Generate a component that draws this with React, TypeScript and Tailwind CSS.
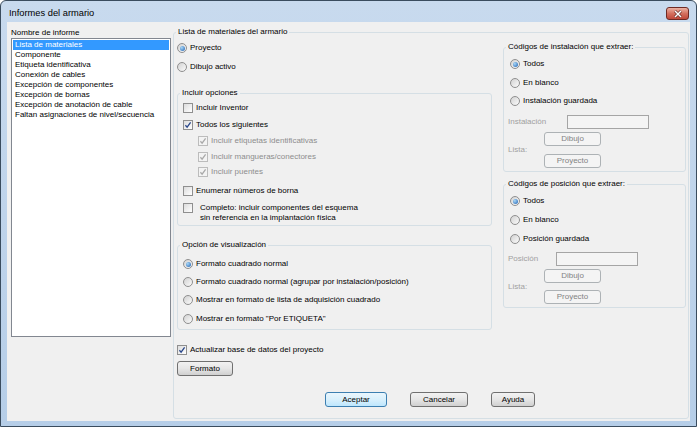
import type { ReactNode } from 'react';

function Radio({ checked, label, className = '' }: { checked?: boolean; label: string; className?: string }) {
  return (
    <div className={`flex h-[10px] items-center ${className}`}>
      <span className="flex h-[10px] w-[10px] shrink-0 items-center justify-center rounded-full border border-[#8f8f8f] bg-gradient-to-br from-[#d2d2d2] to-[#fbfbfb]">
        {checked && (
          <span className="h-[5px] w-[5px] rounded-full bg-[radial-gradient(circle_at_35%_35%,#a9d8f8,#1d5fb0)]" />
        )}
      </span>
      <span className="ml-[3px] whitespace-nowrap">{label}</span>
    </div>
  );
}

function Check({
  checked,
  disabled,
  children,
  className = '',
  textClass = 'ml-[3px]',
}: {
  checked?: boolean;
  disabled?: boolean;
  children: ReactNode;
  className?: string;
  textClass?: string;
}) {
  return (
    <div className={`flex items-start ${className}`}>
      <span
        className={`flex h-[10px] w-[10px] shrink-0 items-center justify-center border ${
          disabled ? 'border-[#bcbcbc] bg-[#f3f3f3]' : 'border-[#8f8f8f] bg-gradient-to-br from-[#dcdcdc] to-white'
        }`}
      >
        {checked && (
          <svg viewBox="0 0 8 8" className="h-[8px] w-[8px]">
            <path
              d="M1.4 4.3 L3.1 6.2 L6.6 1.4"
              fill="none"
              stroke={disabled ? '#a9a9a9' : '#28468a'}
              strokeWidth="1.3"
            />
          </svg>
        )}
      </span>
      <span className={`whitespace-nowrap leading-[10px] ${textClass} ${disabled ? 'text-[#8d8d8d]' : ''}`}>
        {children}
      </span>
    </div>
  );
}

function Group({ title, className = '', children }: { title: string; className?: string; children?: ReactNode }) {
  return (
    <fieldset className={`rounded-[3px] border border-[#d5dfe5] ${className}`}>
      <legend className="ml-[2px] px-[2px] leading-[10px]">{title}</legend>
      {children}
    </fieldset>
  );
}

function Btn({
  children,
  className = '',
  disabled,
  primary,
}: {
  children: ReactNode;
  className?: string;
  disabled?: boolean;
  primary?: boolean;
}) {
  const look = disabled
    ? 'border-[#adb2b5] bg-[#f4f4f4] text-[#838383]'
    : primary
      ? 'border-[#3c7fb1] bg-gradient-to-b from-[#eaf6fd] via-[#d9f0fc] to-[#bee6fd]'
      : 'border-[#707070] bg-gradient-to-b from-[#f2f2f2] via-[#e6e6e6] to-[#d0d0d0]';
  return (
    <div className={`flex items-center justify-center rounded-[3px] border leading-[10px] ${look} ${className}`}>
      {children}
    </div>
  );
}

const reports = [
  'Lista de materiales',
  'Componente',
  'Etiqueta identificativa',
  'Conexión de cables',
  'Excepción de componentes',
  'Excepción de bornas',
  'Excepción de anotación de cable',
  'Faltan asignaciones de nivel/secuencia',
];

function CodeGroup({
  title,
  saved,
  field,
  labelW,
  className,
  gaps,
}: {
  title: string;
  saved: string;
  field: string;
  labelW: string;
  className: string;
  gaps: string[];
}) {
  return (
    <Group title={title} className={className}>
      <div className="ml-[6px] flex flex-col">
        <Radio checked label="Todos" className="mt-[7px]" />
        <Radio label="En blanco" className={gaps[0]} />
        <Radio label={saved} className={gaps[1]} />
      </div>
      <div className={`ml-[4px] flex h-[14px] items-center ${gaps[2]}`}>
        <span className={`${labelW} text-[#a0a0a0]`}>{field}</span>
        <div className="h-[14px] w-[82px] border border-[#a5a5a5] bg-[#f4f4f4]" />
      </div>
      <div className="ml-[4px] mt-[3px] flex items-center">
        <span className="w-[36px] text-[#a0a0a0]">Lista:</span>
        <div className={`flex flex-col ${gaps[3]}`}>
          <Btn disabled className="h-[14px] w-[57px]">
            Dibujo
          </Btn>
          <Btn disabled className="h-[14px] w-[57px]">
            Proyecto
          </Btn>
        </div>
      </div>
    </Group>
  );
}

export default function App() {
  return (
    <div className="flex h-[427px] w-[697px] flex-col rounded-t-[6px] border border-[#3a4c5e] bg-gradient-to-b from-[#c8daee] to-[#b6cee8] font-['Liberation_Sans',Arial,sans-serif] text-[8px] leading-[10px] text-black">
      {/* title bar */}
      <div className="relative flex h-[21px] shrink-0 items-center pl-[8px] pt-[2px]">
        <span className="text-[9.3px]">Informes del armario</span>
        <div className="absolute right-[7px] top-[6px] flex h-[13px] w-[23px] items-center justify-center rounded-[3px] border border-[#6e2a24] bg-gradient-to-b from-[#eab1a3] via-[#d4705f] to-[#c0483a]">
          <svg viewBox="0 0 10 8" className="h-[8px] w-[10px]">
            <path d="M2 1 L8 7 M8 1 L2 7" stroke="#5a1f1a" strokeWidth="2.6" />
            <path d="M2 1 L8 7 M8 1 L2 7" stroke="#ffffff" strokeWidth="1.5" />
          </svg>
        </div>
      </div>

      {/* client area */}
      <div className="mx-[6px] mb-[5px] flex flex-1 bg-[#f0f0f0]">
        <div className="ml-[4px] mt-[6px] flex w-[160px] flex-col">
          <span>Nombre de informe</span>
          <div className="h-[299px] border border-[#828790] bg-white p-px">
            {reports.map((r, i) => (
              <div
                key={r}
                className={`h-[10px] whitespace-nowrap pl-[2px] ${i === 0 ? 'bg-[#3399ff] text-white' : ''}`}
              >
                {r}
              </div>
            ))}
          </div>
        </div>

        <Group title="Lista de materiales del armario" className="ml-[2px] mt-[5px] h-[392px] w-[516px]">
          <div className="flex">
            <div className="ml-[3px] flex w-[315px] flex-col">
              <Radio checked label="Proyecto" className="mt-[6px]" />
              <Radio label="Dibujo activo" className="mt-[9px]" />

              <Group title="Incluir opciones" className="mt-[16px] h-[138px] w-[315px]">
                <div className="ml-[5px] flex flex-col">
                  <Check className="mt-[5px]">Incluir Inventor</Check>
                  <Check checked className="mt-[7px]">
                    Todos los siguientes
                  </Check>
                  <Check checked disabled className="ml-[15px] mt-[6px]">
                    Incluir etiquetas identificativas
                  </Check>
                  <Check checked disabled className="ml-[15px] mt-[6px]">
                    Incluir mangueras/conectores
                  </Check>
                  <Check checked disabled className="ml-[15px] mt-[5px]">
                    Incluir puentes
                  </Check>
                  <Check className="mt-[9px]">Enumerar números de borna</Check>
                  <Check className="mt-[7px]" textClass="ml-[7px]">
                    Completo: incluir componentes del esquema
                    <br />
                    sin referencia en la implantación física
                  </Check>
                </div>
              </Group>

              <Group title="Opción de visualización" className="mt-[14px] h-[90px] w-[315px]">
                <div className="ml-[5px] flex flex-col">
                  <Radio checked label="Formato cuadrado normal" className="mt-[9px]" />
                  <Radio label="Formato cuadrado normal (agrupar por instalación/posición)" className="mt-[8px]" />
                  <Radio label="Mostrar en formato de lista de adquisición cuadrado" className="mt-[8px]" />
                  <Radio label={'Mostrar en formato "Por ETIQUETA"'} className="mt-[9px]" />
                </div>
              </Group>

              <Check checked className="mt-[15px]">
                Actualizar base de datos del proyecto
              </Check>
              <Btn className="mt-[6px] h-[15px] w-[56px]">Formato</Btn>
            </div>

            <div className="ml-[11px] flex w-[183px] flex-col">
              <CodeGroup
                title="Códigos de instalación que extraer:"
                saved="Instalación guardada"
                field="Instalación"
                labelW="w-[59px]"
                className="mt-[5px] h-[130px]"
                gaps={['mt-[9px]', 'mt-[8px]', 'mt-[9px]', 'gap-[8px]']}
              />
              <CodeGroup
                title="Códigos de posición que extraer:"
                saved="Posición guardada"
                field="Posición"
                labelW="w-[48px]"
                className="mt-[7px] h-[129px]"
                gaps={['mt-[9px]', 'mt-[9px]', 'mt-[8px]', 'gap-[7px]']}
              />
            </div>
          </div>

          <div className="mt-[16px] flex justify-center gap-[23px] pr-[2px]">
            <Btn primary className="h-[15px] w-[62px]">
              Aceptar
            </Btn>
            <Btn className="h-[15px] w-[58px]">Cancelar</Btn>
            <Btn className="h-[15px] w-[44px]">Ayuda</Btn>
          </div>
        </Group>
      </div>
    </div>
  );
}
